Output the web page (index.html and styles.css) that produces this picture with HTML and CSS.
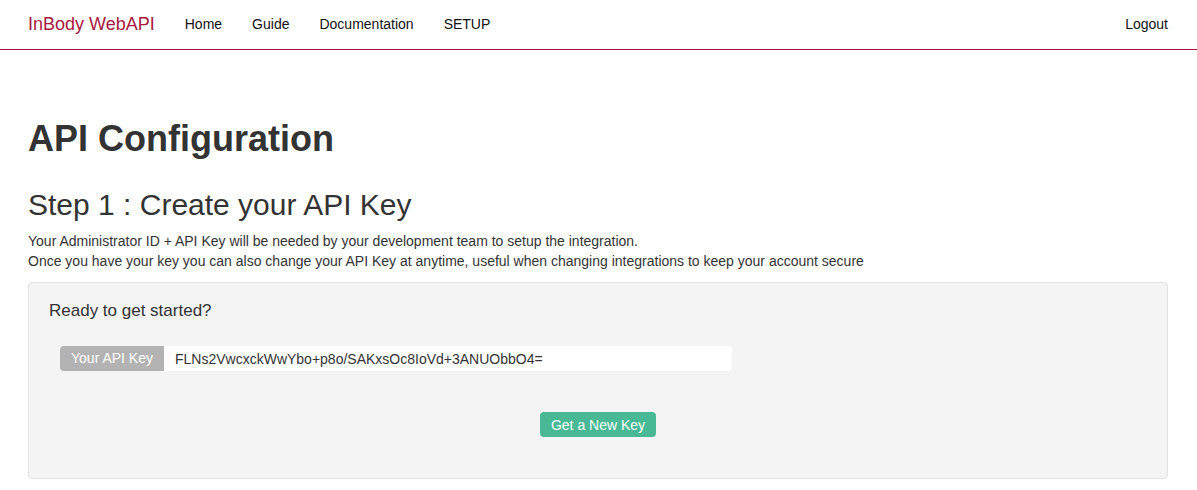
FILE: index.html
```html
<!DOCTYPE html>
<html lang="en">
<head>
  <meta charset="UTF-8" />
  <title>API Configuration - InBody WebAPI</title>
  <link rel="stylesheet" href="styles.css">
</head>
<body>
  <nav class="navbar">
    <div class="nav-inner">
      <a class="brand" href="#">InBody WebAPI</a>
      <ul class="nav-links">
        <li><a href="#">Home</a></li>
        <li><a href="#">Guide</a></li>
        <li><a href="#">Documentation</a></li>
        <li><a href="#">SETUP</a></li>
      </ul>
      <a class="logout" href="#">Logout</a>
    </div>
  </nav>

  <div class="container">
    <h1>API Configuration</h1>
    <h2>Step 1 : Create your API Key</h2>
    <p>
      Your Administrator ID + API Key will be needed by your development team to setup the integration.<br>
      Once you have your key you can also change your API Key at anytime, useful when changing integrations to keep your account secure
    </p>

    <div class="well">
      <h4>Ready to get started?</h4>
      <div class="key-row">
        <div class="input-group">
          <span class="addon">Your API Key</span>
          <input class="key-input" type="text" value="FLNs2VwcxckWwYbo+p8o/SAKxsOc8IoVd+3ANUObbO4=" readonly>
        </div>
      </div>
      <div class="actions">
        <button class="btn-key">Get a New Key</button>
      </div>
    </div>
  </div>
</body>
</html>
```

FILE: styles.css
```css
* {
  box-sizing: border-box;
}
body {
  margin: 0;
  font-family: "Liberation Sans", Arial, sans-serif;
  font-size: 14px;
  line-height: 20px;
  color: #333;
  background: #fff;
}
a {
  text-decoration: none;
}
.navbar {
  height: 50px;
  border-bottom: 1px solid #a8173d;
}
.nav-inner {
  display: flex;
  align-items: center;
  height: 48px;
  padding: 0 29px 0 28px;
}
.brand {
  color: #a8173d;
  font-size: 18px;
  margin-right: 15px;
}
.nav-links {
  display: flex;
  list-style: none;
  margin: 0;
  padding: 0;
  flex: 1;
}
.nav-links a,
.logout {
  display: block;
  color: #111;
  padding: 0 15px;
}
.logout {
  padding: 0;
}
.container {
  padding: 0 29px 0 28px;
}
h1 {
  font-size: 36px;
  line-height: 1.1;
  font-weight: bold;
  margin: 69px 0 10px;
}
h2 {
  font-size: 30px;
  line-height: 1.1;
  font-weight: normal;
  margin: 29px 0 10px;
}
p {
  margin: 0 0 11px;
}
.well {
  background: #f4f4f4;
  border: 1px solid #e3e3e3;
  border-radius: 4px;
  padding: 19px 20px 20px 20px;
  height: 197px;
}
.well h4 {
  font-size: 17px;
  font-weight: normal;
  line-height: 1.1;
  margin: 0;
}
.key-row {
  padding: 26px 0 0 11px;
}
.input-group {
  display: flex;
  width: 672px;
  height: 25px;
}
.addon {
  background: #b3b3b3;
  color: #fff;
  padding: 0 11px;
  line-height: 25px;
  border-radius: 4px 0 0 4px;
  white-space: nowrap;
}
.key-input {
  flex: 1;
  border: none;
  background: #fff;
  border-radius: 0 4px 4px 0;
  padding: 0 11px;
  font-family: inherit;
  font-size: 14px;
  color: #333;
  outline: none;
}
.actions {
  display: flex;
  justify-content: center;
  margin-top: 41px;
}
.btn-key {
  background: #48b895;
  color: #fff;
  border: none;
  border-radius: 4px;
  height: 25px;
  width: 116px;
  padding: 0;
  font-family: inherit;
  font-size: 14px;
  cursor: pointer;
}
```
